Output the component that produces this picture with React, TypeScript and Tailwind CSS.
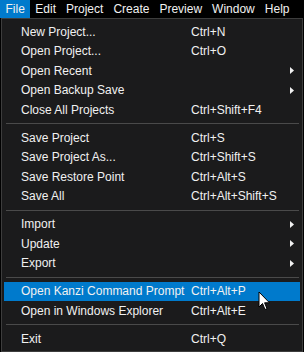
const menus = ["File", "Edit", "Project", "Create", "Preview", "Window", "Help"];

type Item =
  | { kind: "sep" }
  | { kind: "item"; label: string; shortcut?: string; sub?: boolean; active?: boolean };

const items: Item[] = [
  { kind: "item", label: "New Project...", shortcut: "Ctrl+N" },
  { kind: "item", label: "Open Project...", shortcut: "Ctrl+O" },
  { kind: "item", label: "Open Recent", sub: true },
  { kind: "item", label: "Open Backup Save", sub: true },
  { kind: "item", label: "Close All Projects", shortcut: "Ctrl+Shift+F4" },
  { kind: "sep" },
  { kind: "item", label: "Save Project", shortcut: "Ctrl+S" },
  { kind: "item", label: "Save Project As...", shortcut: "Ctrl+Shift+S" },
  { kind: "item", label: "Save Restore Point", shortcut: "Ctrl+Alt+S" },
  { kind: "item", label: "Save All", shortcut: "Ctrl+Alt+Shift+S" },
  { kind: "sep" },
  { kind: "item", label: "Import", sub: true },
  { kind: "item", label: "Update", sub: true },
  { kind: "item", label: "Export", sub: true },
  { kind: "sep" },
  { kind: "item", label: "Open Kanzi Command Prompt", shortcut: "Ctrl+Alt+P", active: true },
  { kind: "item", label: "Open in Windows Explorer", shortcut: "Ctrl+Alt+E" },
  { kind: "sep" },
  { kind: "item", label: "Exit", shortcut: "Ctrl+Q" },
];

const SubArrow = () => (
  <svg width="4" height="7" viewBox="0 0 4 7" className="mr-[6px]">
    <path d="M0 0 L4 3.5 L0 7 Z" fill="#f1f1f1" />
  </svg>
);

const Cursor = () => (
  <svg width="13" height="21" viewBox="0 0 13 21" className="absolute left-[258px] top-[291px]">
    <path
      d="M1 1 L1 16 L4.5 12.5 L7 18.5 L9 17.7 L6.6 11.8 L11.5 11.8 Z"
      fill="#ffffff"
      stroke="#000000"
      strokeWidth="1"
      strokeLinejoin="miter"
    />
  </svg>
);

export default function App() {
  return (
    <div className="relative h-[352px] w-[304px] overflow-hidden bg-black font-['Liberation_Sans',Arial,sans-serif] text-[12px] text-[#f1f1f1]">
      <div className="flex h-[18px]">
        {menus.map((m) => (
          <div
            key={m}
            className={`flex h-full items-center whitespace-nowrap ${
              m === "File" ? "bg-[#007acc] px-[5.5px]" : "px-[5px]"
            }`}
          >
            {m}
          </div>
        ))}
      </div>

      <div className="ml-[1px] w-[302px] border border-[#3d3d3d] bg-[#1b1b1c] px-[2px] pb-[2px] pt-[3px]">
        {items.map((it, i) =>
          it.kind === "sep" ? (
            <div key={i} className="flex h-[8.5px] items-center pl-[2px] pr-[1px]">
              <div className="h-px w-full bg-[#4a4a4a]" />
            </div>
          ) : (
            <div
              key={i}
              className={`flex h-[19.5px] items-center ${it.active ? "bg-[#007acc]" : ""}`}
            >
              <span className="w-[187px] shrink-0 whitespace-nowrap pl-[17px]">{it.label}</span>
              <span className="flex-1 whitespace-nowrap">{it.shortcut}</span>
              {it.sub && <SubArrow />}
            </div>
          )
        )}
      </div>

      <Cursor />
    </div>
  );
}
